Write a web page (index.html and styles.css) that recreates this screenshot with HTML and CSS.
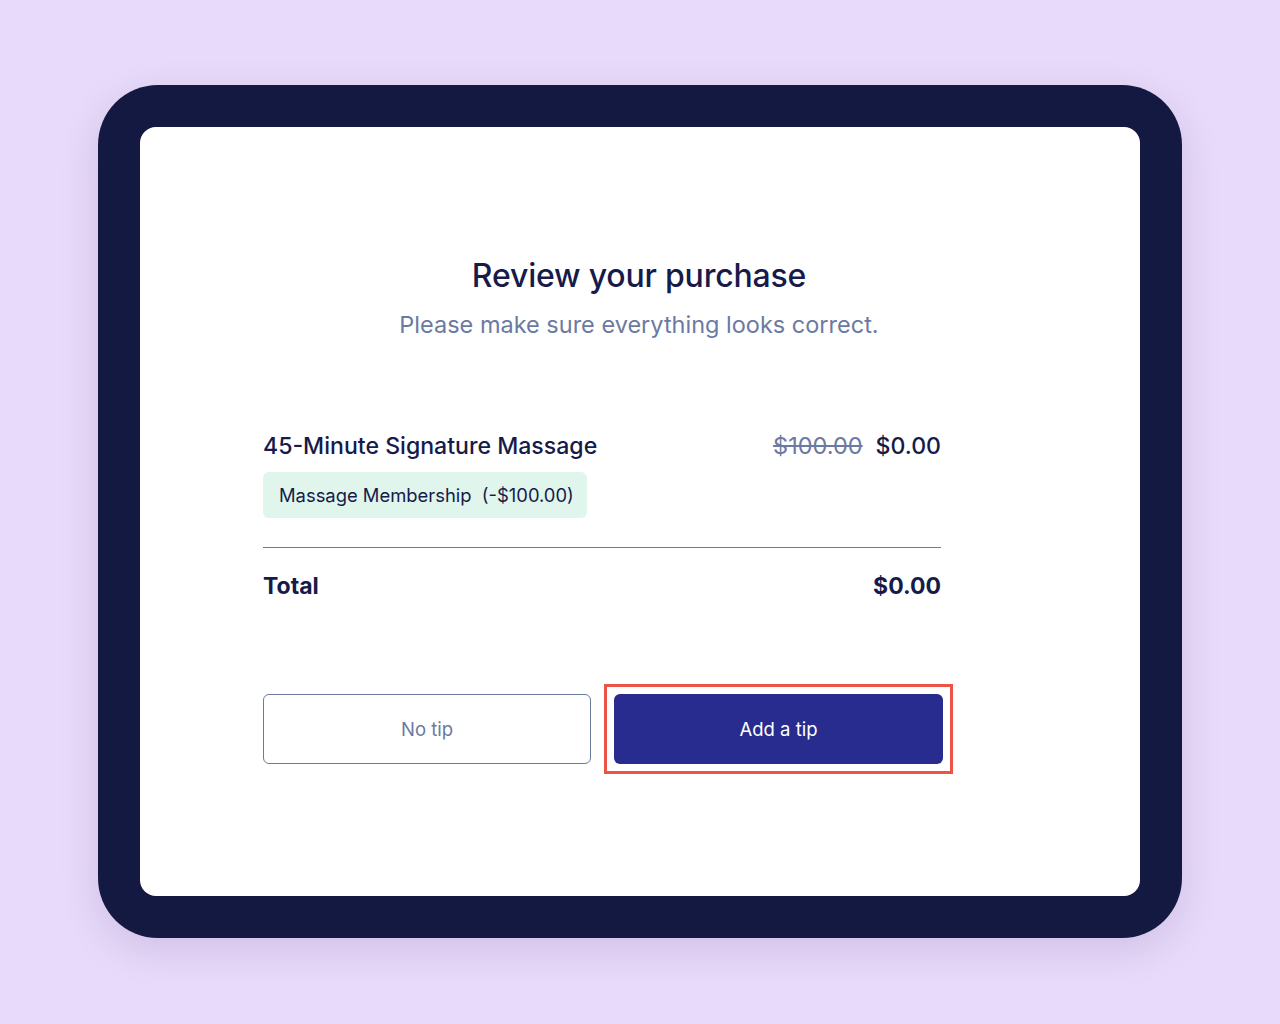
FILE: index.html
```html
<!DOCTYPE html>
<html>
<head>
<meta charset="utf-8">
<link rel="stylesheet" href="styles.css">
</head>
<body>
<div class="frame">
  <div class="screen">
    <div class="content">
      <h1 class="title">Review your purchase</h1>
      <p class="subtitle">Please make sure everything looks correct.</p>
      <div class="item">
        <div class="item-row">
          <span class="item-name">45-Minute Signature Massage</span>
          <span class="prices"><span class="old">$100.00</span><span class="new">$0.00</span></span>
        </div>
        <div class="badge">Massage Membership&nbsp; (-$100.00)</div>
      </div>
      <div class="total-row">
        <span>Total</span>
        <span>$0.00</span>
      </div>
      <div class="actions">
        <button class="btn btn-outline">No tip</button>
        <div class="highlight"><button class="btn btn-primary">Add a tip</button></div>
      </div>
    </div>
  </div>
</div>
</body>
</html>
```
FILE: styles.css
```css
html, body { margin: 0; padding: 0; }
body {
  background: #e8dafa;
  font-family: "Inter", "Noto Sans", sans-serif;
  width: 1280px;
  height: 1024px;
  overflow: hidden;
}
.frame {
  box-sizing: border-box;
  margin: 85px 0 0 98px;
  width: 1084px;
  height: 853px;
  padding: 42px;
  background: #131940;
  border-radius: 60px;
  box-shadow: 0 12px 40px rgba(40, 20, 80, 0.12);
}
.screen {
  background: #ffffff;
  border-radius: 16px;
  height: 769px;
  box-sizing: border-box;
  padding: 129px 0 0 123px;
}
.content {
  width: 680px;
  display: flex;
  flex-direction: column;
}
.title {
  margin: 0;
  text-align: center;
  font-size: 32px;
  line-height: 40px;
  font-weight: 500;
  color: #161b4a;
  letter-spacing: -0.2px;
  padding-left: 72px;
}
.subtitle {
  margin: 14px 0 0;
  text-align: center;
  font-size: 23.5px;
  line-height: 30px;
  color: #6b7aa1;
  padding-left: 72px;
}
.item {
  margin-top: 91px;
  display: flex;
  flex-direction: column;
  padding-right: 2px;
}
.item-row {
  display: flex;
  justify-content: space-between;
  align-items: center;
  font-size: 23.1px;
  font-weight: 500;
  line-height: 30px;
  color: #161b4a;
}
.prices { display: flex; gap: 13px; }
.old { color: #6b7aa1; text-decoration: line-through; font-weight: 400; font-size: 23.5px; }
.badge {
  align-self: flex-start;
  margin-top: 11px;
  background: #e0f5ec;
  border-radius: 6px;
  height: 46px;
  line-height: 46px;
  padding: 0 13px 0 16px;
  font-size: 18.4px;
  color: #161b4a;
}
.total-row {
  margin-top: 29px;
  margin-right: 2px;
  border-top: 1.5px solid #6b7aa1;
  padding-top: 23px;
  display: flex;
  justify-content: space-between;
  font-size: 23px;
  line-height: 30px;
  font-weight: 700;
  color: #161b4a;
}
.actions {
  margin-top: 93px;
  display: flex;
  gap: 23px;
}
.btn {
  font-family: inherit;
  font-size: 18.5px;
  height: 70px;
  border-radius: 6px;
  box-sizing: border-box;
  cursor: pointer;
}
.btn-outline {
  width: 328px;
  background: #ffffff;
  border: 1.5px solid #6b7aa1;
  color: #6b7aa1;
}
.highlight {
  outline: 3px solid #ea5545;
  outline-offset: 7px;
  display: flex;
}
.btn-primary {
  width: 329px;
  background: #282c8e;
  border: none;
  color: #ffffff;
}
```
